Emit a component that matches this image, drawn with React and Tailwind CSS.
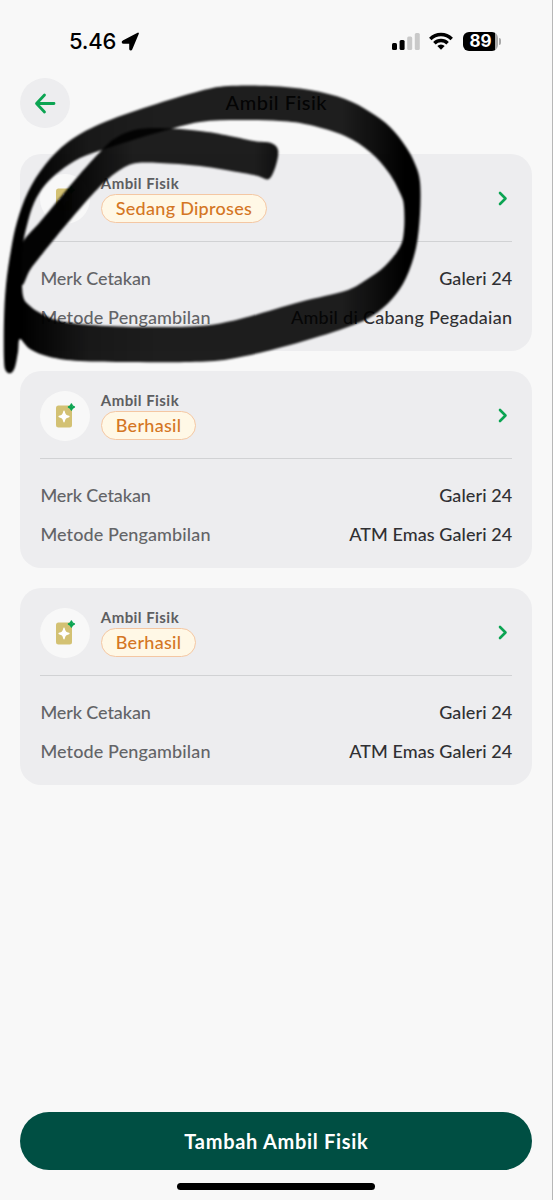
const items = [
  { id: 1, title: "Ambil Fisik", status: "Sedang Diproses", merk: "Galeri 24", metode: "Ambil di Cabang Pegadaian" },
  { id: 2, title: "Ambil Fisik", status: "Berhasil", merk: "Galeri 24", metode: "ATM Emas Galeri 24" },
  { id: 3, title: "Ambil Fisik", status: "Berhasil", merk: "Galeri 24", metode: "ATM Emas Galeri 24" },
];

const StatusBar = () => (
  <div className="flex h-[78px] shrink-0 items-start justify-between pl-[69px] pr-[51px] pt-[27px] font-['Inter',sans-serif]">
    <div className="flex h-7 items-center gap-[5px]">
      <span className="text-[22px] font-medium leading-7 tracking-[-0.2px] text-black">5.46</span>
      <svg className="h-[19px] w-[19px]" viewBox="0 0 19 19">
        <path d="M17 1.500 10.400 17.200c-.3.700-1.300.600-1.300-.2v-6.100H2.500c-1 0-1.200-1.100-.3-1.500Z" fill="#000" stroke="#000" strokeWidth="1.800" strokeLinejoin="round" />
      </svg>
    </div>
    <div className="flex h-7 items-center">
      <svg className="h-[18px] w-[28px]" viewBox="0 0 28 18">
        <rect x="0" y="11" width="5" height="7" rx="1.5" />
        <rect x="7.6" y="8" width="5" height="10" rx="1.5" />
        <rect x="15.2" y="4.5" width="5" height="13.5" rx="1.5" fill="#c9c9c9" />
        <rect x="22.8" y="1" width="5" height="17" rx="1.5" fill="#c9c9c9" />
      </svg>
      <svg className="ml-[9px] h-[18px] w-[24px]" viewBox="0 0 24 18" fill="none" stroke="#000" strokeWidth="3.5">
        <path d="M1.3 6.9a15.3 15.3 0 0 1 21.4 0" />
        <path d="M5.4 11.3a9.4 9.4 0 0 1 13.2 0" />
        <path d="m12 17.8-3.7-3.7a5.3 5.3 0 0 1 7.4 0Z" fill="#000" stroke="none" />
      </svg>
      <div className="ml-[10px] flex items-center">
        <div className="flex h-[19px] w-[35px] items-center justify-center rounded-[6px] bg-[linear-gradient(90deg,#000_91%,#a8a8a8_91%)] text-[17px] font-bold leading-none text-white">
          89
        </div>
        <div className="ml-px h-[7px] w-[2px] rounded-r-full bg-[#a8a8a8]"></div>
      </div>
    </div>
  </div>
);

const GoldIcon = () => (
  <div className="flex size-[50px] shrink-0 items-center justify-center rounded-full bg-[#f8f8f8]">
    <svg className="size-[26px]" viewBox="0 0 26 26">
      <rect x="4" y="2.5" width="16" height="22" rx="2.5" fill="#d3c173" />
      <path d="M12 8.300c.9 3.700 1.500 4.300 4.900 5.200-3.400.9-4 1.500-4.900 5.200-.9-3.700-1.500-4.300-4.900-5.200 3.400-.9 4-1.500 4.900-5.200Z" fill="#fff" stroke="#fff" strokeWidth="1.400" strokeLinejoin="round" />
      <path d="M19.400.9c.6 2.200 1 2.500 3 3.100-2 .6-2.400.9-3 3.100-.6-2.200-1-2.500-3-3.100 2-.6 2.400-.9 3-3.100Z" fill="#0ba452" stroke="#0ba452" strokeWidth="1.400" strokeLinejoin="round" />
    </svg>
  </div>
);

const Card = ({ item }) => (
  <div className="h-[197px] rounded-[21px] bg-[#ededef] px-5 pt-5">
    <div className="flex h-[68px] items-start border-b border-[#d1d2d4]">
      <GoldIcon />
      <div className="ml-[10.400px] flex flex-col items-start">
        <span className="h-[20px] text-[15px] font-bold leading-[19px] tracking-[0.45px] text-[#5d5e61]">{item.title}</span>
        <span className="flex h-[29px] items-center rounded-full border border-[#f4c7a3] bg-[#fff8e6] px-[14px] text-[18px] font-medium tracking-[0.28px] text-[#d47624]">
          {item.status}
        </span>
      </div>
      <svg className="ml-auto mt-[17px] h-4 w-4" viewBox="0 0 16 16" fill="none" stroke="#0ba452" strokeWidth="2.6" strokeLinecap="round" strokeLinejoin="round">
        <path d="m4 2 5.500 5.500L4 13" />
      </svg>
    </div>
    <div className="mt-[23px] flex flex-col gap-[12px] text-[18px] font-medium leading-[27px]">
      <div className="flex justify-between">
        <span className="tracking-[-0.1px] text-[#636467]">Merk Cetakan</span>
        <span className="tracking-[0.1px] text-[#303033]">{item.merk}</span>
      </div>
      <div className="flex justify-between">
        <span className="tracking-[0.12px] text-[#636467]">Metode Pengambilan</span>
        <span className={item.id === 1 ? "tracking-[0.28px] text-[#303033]" : "tracking-[0.080px] text-[#303033]"}>{item.metode}</span>
      </div>
    </div>
  </div>
);

// Titik-titik tepi coretan, disambung jadi kurva halus
const loopOuter = [
  [20, 339], [30, 349], [50, 357], [80, 361], [130, 362], [190, 362], [230, 359], [290, 345], [345, 328],
  [372, 316], [392, 299], [406, 278], [416, 248], [420, 214], [420, 182], [415, 164], [406, 147], [390, 127],
  [370, 112], [345, 99], [310, 90], [270, 86], [228, 86], [200, 91], [150, 106], [100, 124], [68, 142],
  [45, 165], [28, 192], [17, 222], [11, 250], [6, 285], [4, 320], [4, 360], [6, 371], [11, 373], [15, 367], [18, 352],
];

const loopInner = [
  [23, 296], [30, 306], [42, 314], [60, 321], [90, 325], [140, 327], [200, 326], [240, 319], [300, 302],
  [345, 291], [366, 280], [385, 266], [400, 247], [404, 230], [404, 207], [401, 195], [389, 173], [370, 152],
  [345, 136], [310, 125], [280, 121], [240, 120], [200, 122], [160, 132], [130, 141], [105, 149], [80, 158],
  [60, 171], [45, 185], [34, 203], [27, 225], [23, 245], [22, 270],
];

const arm = [
  [23, 242], [40, 222], [60, 198], [80, 174], [100, 152], [114, 139], [134, 130], [160, 128], [200, 131],
  [225, 135], [254, 141], [271, 143], [278, 150], [276, 165], [269, 179], [258, 176], [243, 173], [200, 166],
  [160, 163], [137, 163], [123, 168], [108, 179], [90, 197], [65, 226], [43, 253], [30, 270], [22, 285], [19, 262],
];

const toCurve = (pts) => {
  const n = pts.length;
  let d = `M${pts[0][0]} ${pts[0][1]}`;
  for (let i = 0; i < n; i++) {
    const p0 = pts[(i - 1 + n) % n];
    const p1 = pts[i];
    const p2 = pts[(i + 1) % n];
    const p3 = pts[(i + 2) % n];
    d += `C${p1[0] + (p2[0] - p0[0]) / 6} ${p1[1] + (p2[1] - p0[1]) / 6} ${p2[0] - (p3[0] - p1[0]) / 6} ${p2[1] - (p3[1] - p1[1]) / 6} ${p2[0]} ${p2[1]}`;
  }
  return d + "Z";
};

// Coretan spidol di atas kartu pertama
const Marker = () => (
  <svg className="pointer-events-none absolute left-0 top-0 h-[400px] w-[440px]" viewBox="0 0 440 400">
    <defs>
      <linearGradient id="ink" gradientUnits="userSpaceOnUse" x1="0" y1="0" x2="440" y2="0">
        <stop offset="0.05" stopOpacity="1" />
        <stop offset="0.2" stopOpacity="0.9" />
        <stop offset="0.35" stopOpacity="0.88" />
        <stop offset="0.78" stopOpacity="0.88" />
        <stop offset="0.92" stopOpacity="1" />
      </linearGradient>
      <linearGradient id="armInk" gradientUnits="userSpaceOnUse" x1="0" y1="0" x2="440" y2="0">
        <stop offset="0.14" stopOpacity="0.99" />
        <stop offset="0.3" stopOpacity="0.88" />
        <stop offset="0.58" stopOpacity="0.88" />
        <stop offset="0.62" stopOpacity="0.92" />
      </linearGradient>
      <filter id="soft" x="-5%" y="-5%" width="110%" height="110%">
        <feGaussianBlur stdDeviation="1.3" />
      </filter>
    </defs>
    <g filter="url(#soft)">
      <path fill="url(#ink)" fillRule="evenodd" d={toCurve(loopOuter) + toCurve(loopInner)} />
      <path fill="url(#armInk)" d={toCurve(arm)} />
    </g>
  </svg>
);

export default function App() {
  return (
    <div className="relative flex h-[1200px] w-[553px] flex-col overflow-hidden border-r border-[#b7b7b7] bg-[#f8f8f8] font-['Lato','Noto_Sans',sans-serif]">
      <StatusBar />

      {/* Header */}
      <header className="grid h-[50px] grid-cols-[50px_1fr_50px] items-center pl-[20.400px] pr-[19.600px]">
        <button className="flex size-[50px] items-center justify-center rounded-full bg-[#ededef]">
          <svg className="size-6" viewBox="0 0 24 24" fill="none" stroke="#0ba452" strokeWidth="2.8" strokeLinecap="round" strokeLinejoin="round">
            <path d="M21 12.500H4M11.500 4 3.500 12.500l8 8.500" />
          </svg>
        </button>
        <h1 className="-mt-[2px] text-center text-[20px] font-medium tracking-[0.5px] text-[#202124]">Ambil Fisik</h1>
      </header>

      {/* Daftar transaksi */}
      <main className="mt-[25.500px] flex flex-col gap-5 pl-[20.400px] pr-[19.600px]">
        {items.map((item) => (
          <Card key={item.id} item={item} />
        ))}
      </main>

      {/* Tombol bawah */}
      <footer className="mt-auto flex flex-col items-center pb-[10px] pl-[20.400px] pr-[19.600px]">
        <button className="h-[58px] w-full rounded-[29px] bg-[#004f43] pb-px text-[20px] font-bold tracking-[0.7px] text-white">
          Tambah Ambil Fisik
        </button>
        <div className="mt-[13px] h-[7px] w-[198px] rounded-full bg-black"></div>
      </footer>

      <Marker />
    </div>
  );
}
